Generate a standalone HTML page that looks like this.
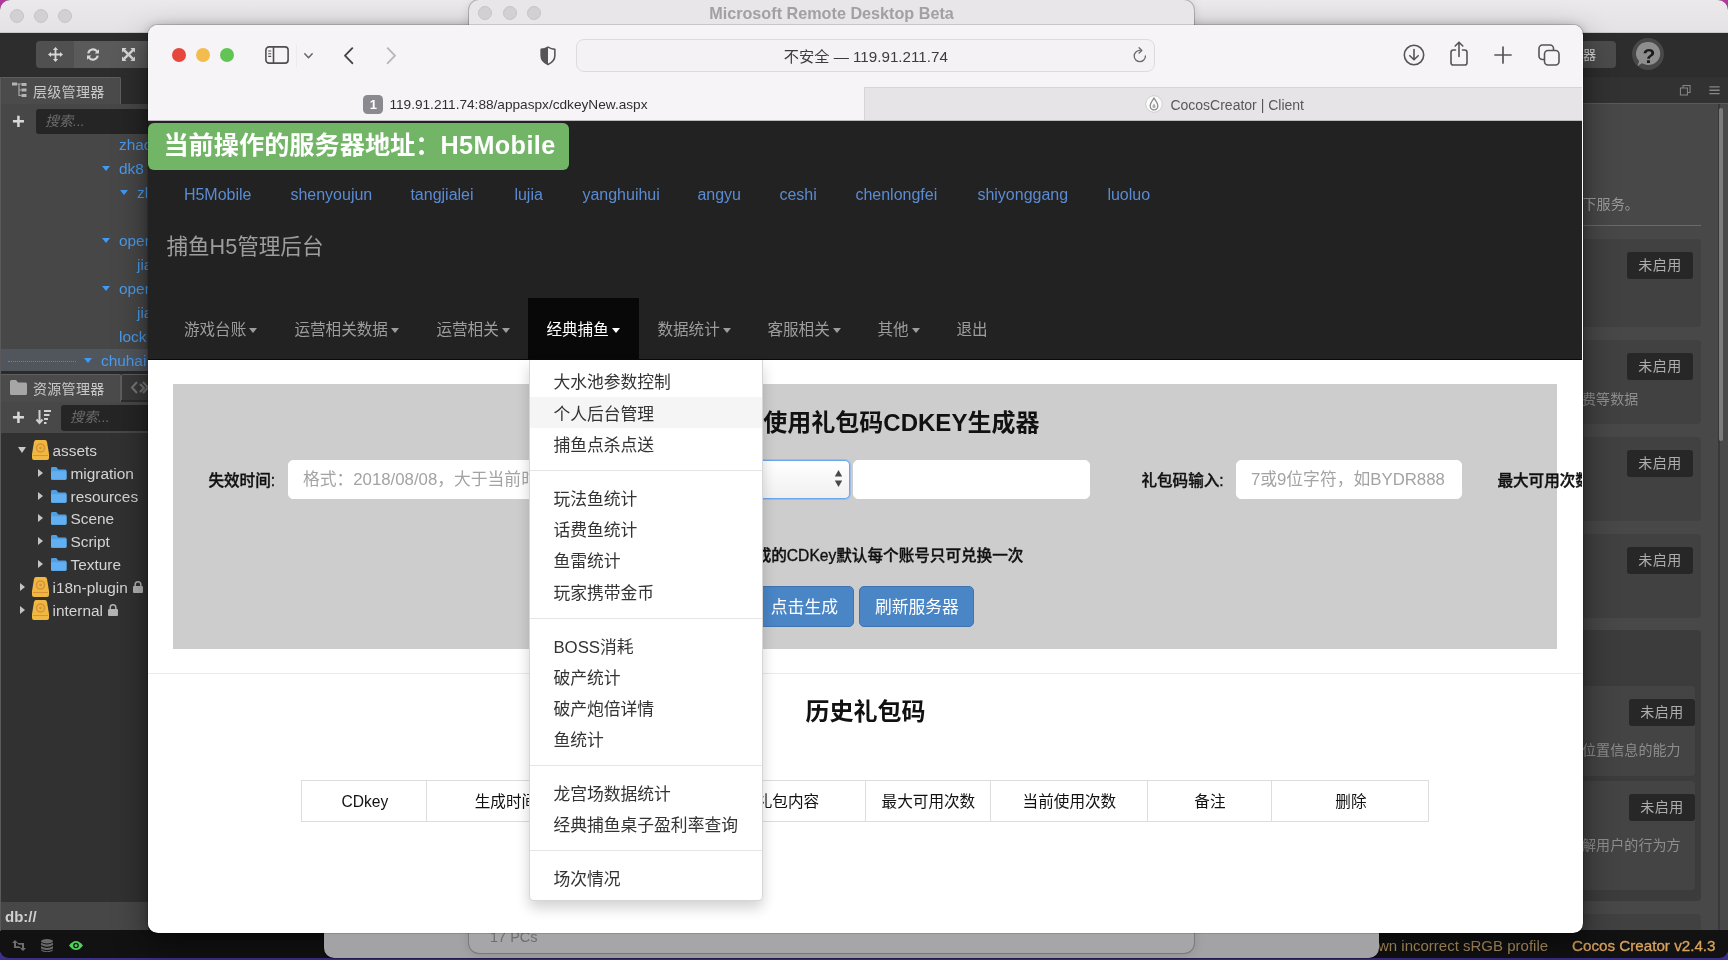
<!DOCTYPE html>
<html lang="zh-CN">
<head>
<meta charset="utf-8">
<title>捕鱼H5管理后台</title>
<style>
*{box-sizing:border-box;margin:0;padding:0}
html,body{width:1728px;height:960px;overflow:hidden;background:#3b2f8e}
body{font-family:"Liberation Sans","Noto Sans CJK SC",sans-serif;-webkit-font-smoothing:antialiased}
.abs,.t{position:absolute}
.t{white-space:nowrap;line-height:1}
#desk{position:absolute;left:0;top:0;width:1728px;height:960px;overflow:hidden;will-change:transform;
 background:linear-gradient(180deg,#b5369c 0,#a0349c 40px,#5a2f94 900px,#3b2f8e 960px)}
/* ---------- Cocos Creator window ---------- */
#cocos{position:absolute;left:0;top:0;width:1728px;height:958px;border-radius:10px 10px 9px 9px;overflow:hidden;background:#2c2c2c}
#cc-title{position:absolute;left:0;top:0;width:1728px;height:33px;background:linear-gradient(180deg,#ebe9eb,#e4e2e4);border-bottom:1px solid #c9c7c9}
.tl{position:absolute;width:14px;height:14px;border-radius:50%}
.tl.g{background:#d2d0d2;border:1px solid #c6c4c6}
/* ---------- Safari ---------- */
#safari{position:absolute;left:148.400px;top:25px;width:1434.600px;height:907.500px;border-radius:10px;overflow:hidden;background:#fff;
 box-shadow:0 0 0 1px rgba(0,0,0,.14)}
#sf-shadow{position:absolute;left:148.400px;top:25px;width:1434.600px;height:907.500px;border-radius:10px;box-shadow:0 14px 34px rgba(0,0,0,.45),0 0 10px rgba(0,0,0,.2)}

/* cocos body */
#cc-tool{position:absolute;left:0;top:34px;width:1728px;height:42px;background:#2d2d2d}
.cc-btns{position:absolute;left:36px;top:41px;width:160px;height:27px;border-radius:4px;background:#505050;overflow:hidden}
.cc-btns i{position:absolute;top:0;height:27px;background:#5a5a5a}
.cc-tabrow{position:absolute;height:27px;background:#2d2d2d}
.cc-tab{position:absolute;height:27px;background:#4b4b4b;border:1px solid #5e5e5e;border-bottom:none;border-radius:2px 2px 0 0;color:#cfcfcf;font-size:13.5px}
.cc-panel{position:absolute;background:#474747}
.cc-search{position:absolute;background:#252525;border-radius:3px;color:#6b6b6b;font-style:italic;font-size:14px;line-height:24px;padding-left:9px}
.hn{position:absolute;color:#4a9cf0;font-size:15.400px;line-height:25px;height:24px;white-space:nowrap}
.harr{position:absolute;width:0;height:0;margin-top:.7px;border-left:4.5px solid transparent;border-right:4.5px solid transparent;border-top:5.5px solid #3f9bf5}
.an{position:absolute;color:#d4d4d4;font-size:15.400px;margin-left:.5px;margin-top:.5px;line-height:23px;height:23px;white-space:nowrap}
.aarr-r{position:absolute;width:0;height:0;margin-top:.5px;border-top:4px solid transparent;border-bottom:4px solid transparent;border-left:5.5px solid #c4c4c4}
.aarr-d{position:absolute;width:0;height:0;border-left:4.5px solid transparent;border-right:4.5px solid transparent;border-top:6px solid #c8c8c8}
svg{position:absolute;overflow:visible}

.badge{position:absolute;left:1627px;width:66px;height:27px;border-radius:3px;background:#272727;color:#adadad;font-size:14px;line-height:26px;text-align:center;letter-spacing:.5px}
.card{position:absolute;left:1560px;width:141px;background:#414141;border-radius:4px}
.rtxt{position:absolute;color:#8e8e8e;font-size:14px;line-height:20px;white-space:nowrap;letter-spacing:.1px}

/* mid windows */
#bigwin{position:absolute;left:324px;top:700px;width:1055px;height:257.500px;border-radius:10px;background:#a3a3a5;box-shadow:0 0 0 1px rgba(0,0,0,.35)}
#mrd{position:absolute;left:469px;top:0;width:725px;height:953px;border-radius:10px;background:#a6a6a8;box-shadow:0 0 0 1px rgba(0,0,0,.2),0 2px 12px rgba(0,0,0,.13);overflow:hidden}
#mrd-title{position:absolute;left:0;top:0;width:725px;height:28px;background:#e8e6e8}
/* safari chrome */
#sf-tool{position:absolute;left:0;top:0;width:1434px;height:62px;background:#f6f4f7}
#sf-url{position:absolute;left:428px;top:14px;width:579px;height:33px;border-radius:8px;background:#f4f2f5;border:1px solid #dddbde}
#sf-tabs{position:absolute;left:0;top:62px;width:1434px;height:33px;background:#f6f4f7}
#sf-tab2{position:absolute;left:716px;top:62px;width:718px;height:33px;background:#e6e4e7;border-top:1px solid #d6d4d7;border-left:1px solid #d6d4d7}
#web{position:absolute;left:0;top:95px;width:1434px;height:812px;background:#fff;overflow:hidden}

/* web page */
#nav{position:absolute;left:0;top:0;width:1434px;height:239.500px;background:#222;border-bottom:1px solid #0a0a0a}
#glabel{position:absolute;left:0;top:3px;width:421px;height:47px;border-radius:6px;background:#73b566;color:#fff;font-size:25.200px;font-weight:bold;line-height:45.500px;padding-left:15px;white-space:nowrap}
.sl{position:absolute;top:65px;font-size:16px;line-height:20px;color:#5b8bd2;white-space:nowrap}
.ni{position:absolute;top:199.600px;font-size:15.600px;line-height:20px;color:#9d9d9d;white-space:nowrap}
.ni b{display:inline-block;width:0;height:0;margin-left:3px;vertical-align:2px;border-left:4.800px solid transparent;border-right:4.800px solid transparent;border-top:5px solid currentColor}
#jumbo{position:absolute;left:25px;top:264px;width:1384px;height:264.500px;background:#cdcdcd}
.lbl{position:absolute;font-size:15.600px;font-weight:500;-webkit-text-stroke:.35px #111;color:#111;line-height:20px;white-space:nowrap}
.inp{position:absolute;top:340px;height:38.500px;background:#fff;border:1px solid #fff;border-radius:5px;font-size:16.800px;color:#a3a3a3;line-height:37.500px;padding-left:14px;white-space:nowrap;overflow:hidden}
.btn{position:absolute;top:466px;height:41px;border-radius:5px;background:#4a85c6;border:1px solid #3f74b0;color:#fff;font-size:16.800px;line-height:41.500px;text-align:center;white-space:nowrap}
#tbl{position:absolute;left:153px;top:660px;width:1128px;height:42px;border:1px solid #ddd}
#tbl div{position:absolute;top:0;height:40px;border-left:1px solid #ddd;font-size:15.600px;color:#111;line-height:42px;text-align:center;white-space:nowrap}
#dd{position:absolute;left:380.500px;top:239.500px;width:234px;height:541px;background:#fff;border:1px solid rgba(0,0,0,.16);border-top:none;border-radius:0 0 5px 5px;box-shadow:0 7px 14px rgba(0,0,0,.18)}
#dd .it{position:absolute;left:0;width:232px;margin-top:.5px;height:31px;padding-left:23.500px;font-size:16.800px;line-height:35.500px;color:#333;white-space:nowrap}
#dd .dv{position:absolute;left:0;margin-top:.5px;width:232px;height:1px;background:#e5e5e5}
</style>
</head>
<body>
<div id="desk">
 <div id="cocos">
  <div id="cc-title">
   <div class="tl g" style="left:10px;top:9px"></div>
   <div class="tl g" style="left:34px;top:9px"></div>
   <div class="tl g" style="left:58px;top:9px"></div>
  </div>

  <div id="cc-tool"></div>
  <div class="abs" style="left:0;top:77px;width:1px;height:854px;background:#5a5a5a;z-index:3"></div>
  <div class="cc-btns"><i style="left:38px;width:122px"></i></div>
  <svg style="left:48px;top:47px" width="15" height="15" viewBox="0 0 15 15"><path d="M7.5 0l2.6 3H8.4v3.6H12V4.9l3 2.6-3 2.6V8.4H8.4V12h1.7l-2.6 3-2.6-3h1.7V8.4H3v1.7L0 7.5l3-2.6v1.7h3.6V3H4.9z" fill="#d6d6d6"/></svg>
  <svg style="left:86px;top:48px" width="14" height="13" viewBox="0 0 14 13"><path d="M1.2 5.2A5.9 5.9 0 0 1 11.6 2.6L13 1.2v4.4H8.6l1.6-1.6A3.9 3.9 0 0 0 3.3 5.6zM12.8 7.8A5.9 5.9 0 0 1 2.4 10.4L1 11.8V7.4h4.4L3.8 9a3.9 3.9 0 0 0 6.9-1.6z" fill="#d6d6d6"/></svg>
  <svg style="left:122px;top:48px" width="13" height="13" viewBox="0 0 13 13"><path d="M0 0h4.6L3.2 1.4 6.5 4.7 9.8 1.4 8.4 0H13v4.6L11.6 3.2 8.3 6.5l3.3 3.3L13 8.4V13H8.4l1.4-1.4L6.5 8.3 3.2 11.6 4.6 13H0V8.4l1.4 1.4L4.7 6.5 1.4 3.2 0 4.6z" fill="#d6d6d6"/></svg>

  <!-- hierarchy panel -->
  <div class="cc-tabrow" style="left:0;top:77px;width:148px"></div>
  <div class="cc-tab" style="left:0;top:77px;width:121px"></div>
  <svg style="left:12px;top:82px" width="15" height="16" viewBox="0 0 15 16"><path d="M0 0.500h5v3H0zM9.500 1h5v3h-5zM9.500 6.500h5v3h-5zM9.500 12h5v3h-5z" fill="#b4b4b4"/><path d="M5 2h4.500M7 2v11.500h2.500M7 8h2.500" fill="none" stroke="#a8a8a8" stroke-width="1.200"/></svg>
  <div class="t" style="left:33px;top:85px;font-size:14px;color:#c8c8c8;letter-spacing:.3px">层级管理器</div>
  <div class="cc-panel" style="left:0;top:104px;width:148px;height:268px"></div>
  <div class="t" style="left:12px;top:111px;font-size:22px;font-weight:bold;color:#d8d8d8;line-height:22px">+</div>
  <div class="cc-search" style="left:36px;top:109px;width:120px;height:25px">搜索...</div>
  <div class="hn" style="left:119px;top:132px">zhao</div>
  <div class="harr" style="left:102px;top:165px"></div><div class="hn" style="left:119px;top:156px">dk8</div>
  <div class="harr" style="left:120px;top:189px"></div><div class="hn" style="left:137px;top:180px">zl</div>
  <div class="harr" style="left:102px;top:237px"></div><div class="hn" style="left:119px;top:228px">open</div>
  <div class="hn" style="left:137px;top:252px">jia</div>
  <div class="harr" style="left:102px;top:285px"></div><div class="hn" style="left:119px;top:276px">open</div>
  <div class="hn" style="left:137px;top:300px">jia</div>
  <div class="hn" style="left:119px;top:324px">lock</div>
  <div class="abs" style="left:0;top:349px;width:148px;height:21.500px;background:#51565d"></div>
  <div class="abs" style="left:8px;top:361px;width:68px;height:0;border-top:1px dotted #a37a40"></div>
  <div class="harr" style="left:84px;top:357px"></div><div class="hn" style="left:101px;top:348px">chuhai</div>
  <div class="abs" style="left:0;top:371px;width:148px;height:4px;background:#2a2a2a"></div>

  <!-- assets panel -->
  <div class="cc-tabrow" style="left:0;top:375px;width:148px"></div>
  <div class="cc-tab" style="left:0;top:374px;width:121px;height:28px"></div>
  <div class="cc-tab" style="left:121px;top:374px;width:40px;height:26px;background:#3a3a3a"></div>
  <svg style="left:10px;top:380px" width="17" height="15" viewBox="0 0 17 15"><path d="M0 1.5Q0 0 1.5 0H6l2 2.5h7.5Q17 2.500 17 4v9.500Q17 15 15.500 15h-14Q0 15 0 13.500z" fill="#a6a6a6"/></svg>
  <div class="t" style="left:33px;top:382px;font-size:14px;color:#c8c8c8;letter-spacing:.3px">资源管理器</div>
  <svg style="left:131px;top:381px" width="20" height="13" viewBox="0 0 20 13"><path d="M6 1L1 6.500 6 12M9 3l4 4-4 4M12 1l5 5.500-5 5.500" fill="none" stroke="#777" stroke-width="2"/></svg>
  <div class="cc-panel" style="left:0;top:402px;width:148px;height:31px;background:#484848"></div>
  <div class="t" style="left:12px;top:407px;font-size:22px;font-weight:bold;color:#d8d8d8;line-height:22px">+</div>
  <svg style="left:36px;top:410px" width="15" height="15" viewBox="0 0 15 15"><path d="M3.500 0v12M0.500 9.500l3 3.500 3-3.500" fill="none" stroke="#d0d0d0" stroke-width="2"/><path d="M8 1h7M8 5h5.500M8 9h4M8 13h2.500" stroke="#d0d0d0" stroke-width="2"/></svg>
  <div class="cc-search" style="left:61px;top:405px;width:100px;height:26px;line-height:25px">搜索...</div>
  <div class="cc-panel" style="left:0;top:433px;width:148px;height:469px;background:#313131"></div>
  <div class="aarr-d" style="left:18px;top:447px"></div>
  <svg style="left:32px;top:440px" width="17" height="20" viewBox="0 0 17 20"><path d="M4 0h9q1.500 0 2 2l2 12v4q0 2-2 2H2q-2 0-2-2v-4L2 2Q2.500 0 4 0z" fill="#f0b840"/><circle cx="8.500" cy="8" r="4" fill="none" stroke="#d8933a" stroke-width="1.600"/><circle cx="8.500" cy="8" r="1.400" fill="#d8933a"/><path d="M1 15.500h15" stroke="#d8933a" stroke-width="1"/></svg>
  <div class="an" style="left:52px;top:438px">assets</div>
  <div class="aarr-r" style="left:38px;top:468.5px"></div>
  <svg style="left:51px;top:467.3px" width="15.500" height="12.700" preserveAspectRatio="none" viewBox="0 0 16 15"><path d="M0 1.500Q0 0 1.500 0H5.500l2 3h7Q16 3 16 4.500v9Q16 15 14.500 15h-13Q0 15 0 13.500z" fill="#4e9fe6"/><path d="M0 5h16v8.500Q16 15 14.500 15h-13Q0 15 0 13.500z" fill="#62b0f2"/></svg>
  <div class="an" style="left:70px;top:461px">migration</div>
  <div class="aarr-r" style="left:38px;top:491.5px"></div>
  <svg style="left:51px;top:490.3px" width="15.500" height="12.700" preserveAspectRatio="none" viewBox="0 0 16 15"><path d="M0 1.500Q0 0 1.500 0H5.500l2 3h7Q16 3 16 4.500v9Q16 15 14.500 15h-13Q0 15 0 13.500z" fill="#4e9fe6"/><path d="M0 5h16v8.500Q16 15 14.500 15h-13Q0 15 0 13.500z" fill="#62b0f2"/></svg>
  <div class="an" style="left:70px;top:484px">resources</div>
  <div class="aarr-r" style="left:38px;top:513.5px"></div>
  <svg style="left:51px;top:512.3px" width="15.500" height="12.700" preserveAspectRatio="none" viewBox="0 0 16 15"><path d="M0 1.500Q0 0 1.500 0H5.500l2 3h7Q16 3 16 4.500v9Q16 15 14.500 15h-13Q0 15 0 13.500z" fill="#4e9fe6"/><path d="M0 5h16v8.500Q16 15 14.500 15h-13Q0 15 0 13.500z" fill="#62b0f2"/></svg>
  <div class="an" style="left:70px;top:506px">Scene</div>
  <div class="aarr-r" style="left:38px;top:536.5px"></div>
  <svg style="left:51px;top:535.3px" width="15.500" height="12.700" preserveAspectRatio="none" viewBox="0 0 16 15"><path d="M0 1.500Q0 0 1.500 0H5.500l2 3h7Q16 3 16 4.500v9Q16 15 14.500 15h-13Q0 15 0 13.500z" fill="#4e9fe6"/><path d="M0 5h16v8.500Q16 15 14.500 15h-13Q0 15 0 13.500z" fill="#62b0f2"/></svg>
  <div class="an" style="left:70px;top:529px">Script</div>
  <div class="aarr-r" style="left:38px;top:559.5px"></div>
  <svg style="left:51px;top:558.3px" width="15.500" height="12.700" preserveAspectRatio="none" viewBox="0 0 16 15"><path d="M0 1.500Q0 0 1.500 0H5.500l2 3h7Q16 3 16 4.500v9Q16 15 14.500 15h-13Q0 15 0 13.500z" fill="#4e9fe6"/><path d="M0 5h16v8.500Q16 15 14.500 15h-13Q0 15 0 13.500z" fill="#62b0f2"/></svg>
  <div class="an" style="left:70px;top:552px">Texture</div>
  <div class="aarr-r" style="left:20px;top:582.5px"></div>
  <svg style="left:32px;top:577px" width="17" height="20" viewBox="0 0 17 20"><path d="M4 0h9q1.500 0 2 2l2 12v4q0 2-2 2H2q-2 0-2-2v-4L2 2Q2.500 0 4 0z" fill="#f0b840"/><circle cx="8.500" cy="8" r="4" fill="none" stroke="#d8933a" stroke-width="1.600"/><circle cx="8.500" cy="8" r="1.400" fill="#d8933a"/><path d="M1 15.500h15" stroke="#d8933a" stroke-width="1"/></svg>
  <div class="an" style="left:52px;top:575px">i18n-plugin</div>
  <div class="aarr-r" style="left:20px;top:605.5px"></div>
  <svg style="left:32px;top:600px" width="17" height="20" viewBox="0 0 17 20"><path d="M4 0h9q1.500 0 2 2l2 12v4q0 2-2 2H2q-2 0-2-2v-4L2 2Q2.500 0 4 0z" fill="#f0b840"/><circle cx="8.500" cy="8" r="4" fill="none" stroke="#d8933a" stroke-width="1.600"/><circle cx="8.500" cy="8" r="1.400" fill="#d8933a"/><path d="M1 15.500h15" stroke="#d8933a" stroke-width="1"/></svg>
  <div class="an" style="left:52px;top:598px">internal</div>

  <svg style="left:133px;top:581px" width="10" height="12" viewBox="0 0 10 12"><path d="M2.200 5.500V3.600a2.800 2.800 0 0 1 5.600 0V5.500" fill="none" stroke="#b4b4b4" stroke-width="1.500"/><rect x="0" y="5" width="10" height="7" rx="1" fill="#b4b4b4"/></svg>
  <svg style="left:108px;top:604px" width="10" height="12" viewBox="0 0 10 12"><path d="M2.200 5.500V3.600a2.800 2.800 0 0 1 5.600 0V5.500" fill="none" stroke="#b4b4b4" stroke-width="1.500"/><rect x="0" y="5" width="10" height="7" rx="1" fill="#b4b4b4"/></svg>
  <div class="abs" style="left:0;top:902px;width:148px;height:29px;background:#474747"></div>
  <div class="t" style="left:5px;top:909px;font-size:15px;font-weight:bold;color:#cfcfcf">db://</div>
  <div class="abs" style="left:0;top:931px;width:1728px;height:26px;background:#131313"></div>

  <!-- right side of cocos -->
  <div class="abs" style="left:1560px;top:41px;width:56px;height:27px;border-radius:4px;background:#4c4c4c"></div>
  <div class="t" style="left:1583px;top:48px;font-size:13px;color:#d6d6d6">器</div>
  <div class="abs" style="left:1632px;top:38px;width:32px;height:32px;border-radius:50%;background:#484848"></div>
  <svg style="left:1635px;top:41px" width="27" height="27" viewBox="0 0 27 27"><path d="M13.500 1A12 11.500 0 1 1 7 22.300L2.500 25l1.600-4.800A11.500 11.500 0 0 1 13.500 1z" fill="#8e8e8e"/></svg>
  <div class="t" style="left:1642.500px;top:44.500px;font-size:21px;font-weight:bold;color:#1a1a1a;line-height:22px">?</div>
  <div class="abs" style="left:1582px;top:77px;width:146px;height:26px;background:#323232"></div>
  <div class="abs" style="left:1582px;top:103px;width:146px;height:1px;background:#5a5a5a"></div>
  <svg style="left:1679.500px;top:85px" width="10.500" height="10.500" viewBox="0 0 12 12"><path d="M3.500 0.500h8v8h-8z" fill="none" stroke="#868686" stroke-width="1.200"/><path d="M0.500 3.500h8v8h-8z" fill="#323232" stroke="#868686" stroke-width="1.200"/></svg>
  <svg style="left:1708.500px;top:86px" width="11" height="8.500" viewBox="0 0 12 10"><path d="M0 1h12M0 5h12M0 9h12" stroke="#868686" stroke-width="1.500"/></svg>
  <div class="cc-panel" style="left:1560px;top:104px;width:168px;height:827px;background:#484848"></div>
  <div class="abs" style="left:1718px;top:104px;width:2px;height:827px;background:#383838"></div>
  <div class="abs" style="left:1718.500px;top:108px;width:4px;height:333px;background:#7c7c7c;border-radius:2px"></div>
  <div class="rtxt" style="left:1582.500px;top:193.500px;color:#9c9c9c">下服务。</div>
  <div class="abs" style="left:1560px;top:225px;width:141px;height:1px;background:#6a6a6a"></div>
  <div class="card" style="top:239px;height:88px"></div><div class="badge" style="top:252px">未启用</div>
  <div class="card" style="top:340px;height:84px"></div><div class="badge" style="top:353px">未启用</div>
  <div class="rtxt" style="left:1582px;top:389px">费等数据</div>
  <div class="card" style="top:437px;height:84px"></div><div class="badge" style="top:450px">未启用</div>
  <div class="card" style="top:534px;height:84px"></div><div class="badge" style="top:547px">未启用</div>
  <div class="card" style="top:630px;height:271px;background:#3c3c3c"></div>
  <div class="card" style="top:686px;height:90px;width:135px;background:#444"></div><div class="badge" style="top:699px;left:1629px">未启用</div>
  <div class="rtxt" style="left:1582px;top:740px">位置信息的能力</div>
  <div class="card" style="top:781px;height:109px;width:135px;background:#444"></div><div class="badge" style="top:794px;left:1629px">未启用</div>
  <div class="rtxt" style="left:1582px;top:835px">解用户的行为方</div>
  <div class="card" style="top:914px;height:30px"></div>
  <div class="abs" style="left:0;top:930px;width:1728px;height:28px;background:#121212"></div>
  <svg style="left:12px;top:940px" width="14" height="11" viewBox="0 0 14 11"><path d="M3 0L0 3h2v5h7L7.200 6.200H4V3h2zM11 11l3-3h-2V3H5l1.800 1.800H10V8H8z" fill="#6e6e6e"/></svg>
  <svg style="left:41px;top:939px" width="12" height="13" viewBox="0 0 12 13"><ellipse cx="6" cy="2.200" rx="6" ry="2.200" fill="#6a6a6a"/><path d="M0 3.800q6 3.400 12 0v2.200q-6 3.400-12 0zM0 7.200q6 3.400 12 0v2.200q-6 3.400-12 0zM0 10.600q6 3.400 12 0v0.400q-1 2-6 2t-6-2z" fill="#6a6a6a"/></svg>
  <svg style="left:69px;top:941px" width="14" height="9" viewBox="0 0 14 9"><path d="M0 4.500Q3.500 0 7 0t7 4.500Q10.500 9 7 9T0 4.500z" fill="#4ed25c"/><circle cx="7" cy="4.500" r="2.800" fill="#131313"/><circle cx="7" cy="4.500" r="1.500" fill="#4ed25c"/></svg>
  <div class="t" style="left:1378px;top:938px;font-size:15px;color:#b99a68">wn incorrect sRGB profile</div>
  <div class="t" style="left:1572px;top:937.500px;font-size:15.200px;color:#d9a35c;-webkit-text-stroke:.3px #d9a35c">Cocos Creator v2.4.3</div>

 </div>

 <div id="sf-shadow"></div>
 <div id="bigwin"></div>
 <div id="mrd">
  <div id="mrd-title">
   <div class="tl g" style="left:9px;top:6px"></div>
   <div class="tl g" style="left:34px;top:6px"></div>
   <div class="tl g" style="left:58px;top:6px"></div>
   <div class="t" style="left:0;width:725px;text-align:center;top:5px;font-size:16.200px;font-weight:bold;color:#a2a0a2">Microsoft Remote Desktop Beta</div>
  </div>
  <div class="t" style="left:21px;top:930px;font-size:14.500px;color:#6f6f71">17 PCs</div>
 </div>

 <div id="safari">

  <div id="sf-tool"></div>
  <div class="tl" style="left:23.500px;top:23.100px;background:#e5473c;width:14px;height:14px"></div>
  <div class="tl" style="left:47.500px;top:23.100px;background:#f2bd4e;width:14px;height:14px"></div>
  <div class="tl" style="left:71.500px;top:23.100px;background:#62c455;width:14px;height:14px"></div>
  <svg style="left:117px;top:21.300px" width="24" height="18" viewBox="0 0 24 18"><rect x="0.900" y="0.900" width="22.200" height="16.200" rx="3.200" fill="none" stroke="#4f4f4f" stroke-width="1.600"/><path d="M8.500 1v16" stroke="#4f4f4f" stroke-width="1.600"/><path d="M3.200 5h3M3.200 7.700h3M3.200 10.400h3" stroke="#4f4f4f" stroke-width="1.100"/></svg>
  <svg style="left:156px;top:28px" width="9" height="6" viewBox="0 0 9 6"><path d="M0.800 0.800L4.500 4.700 8.200 0.800" fill="none" stroke="#666" stroke-width="1.500" stroke-linecap="round" stroke-linejoin="round"/></svg>
  <svg style="left:195px;top:21px" width="11" height="19" viewBox="0 0 11 19"><path d="M9.300 2.200L2 9.700 9.300 17.200" fill="none" stroke="#454545" stroke-width="1.900" stroke-linecap="round" stroke-linejoin="round"/></svg>
  <svg style="left:238px;top:21px" width="11" height="19" viewBox="0 0 11 19"><path d="M1.700 2.200L9 9.700 1.700 17.200" fill="none" stroke="#b9b7ba" stroke-width="1.900" stroke-linecap="round" stroke-linejoin="round"/></svg>
  <svg style="left:391.500px;top:20.500px" width="16" height="19.700" viewBox="0 0 17 21"><path d="M8.500 1.200Q5 3.200 1.200 3.600V10.500Q1.200 16.500 8.500 19.800 15.800 16.500 15.800 10.500V3.600Q12 3.200 8.500 1.200z" fill="none" stroke="#555" stroke-width="1.700" stroke-linejoin="round"/><path d="M8.500 1.200Q5 3.200 1.200 3.600V10.500Q1.200 16.500 8.500 19.800z" fill="#555"/></svg>
  <div class="abs" style="left:148px;top:20px;width:1px;height:22px;background:#eceaed"></div>
  <div id="sf-url"></div>
  <div class="t" style="left:428px;width:579px;text-align:center;top:23.500px;font-size:15.200px;color:#3c3c3e">不安全 — 119.91.211.74</div>
  <svg style="left:984.500px;top:22px" width="14" height="16" viewBox="0 0 15 17"><path d="M13.300 9.500A6 6 0 1 1 7.500 3.600" fill="none" stroke="#6a6a6a" stroke-width="1.400" stroke-linecap="round"/><path d="M6.500 0.800L9.500 3.600 6.500 6.400" fill="none" stroke="#6a6a6a" stroke-width="1.400" stroke-linecap="round" stroke-linejoin="round"/></svg>
  <svg style="left:1255px;top:19px" width="22" height="22" viewBox="0 0 22 22"><circle cx="11" cy="11" r="9.700" fill="none" stroke="#555" stroke-width="1.600"/><path d="M11 5.500v10M6.800 11.700L11 15.800l4.200-4.100" fill="none" stroke="#555" stroke-width="1.600" stroke-linecap="round" stroke-linejoin="round"/></svg>
  <svg style="left:1302px;top:16px" width="18" height="25" viewBox="0 0 18 25"><path d="M5.500 9H3.300Q1 9 1 11.300v10.400Q1 24 3.300 24h11.400Q17 24 17 21.700V11.300Q17 9 14.700 9H12.500" fill="none" stroke="#555" stroke-width="1.600" stroke-linecap="round"/><path d="M9 15.500V1.500M5.200 5L9 1.200 12.800 5" fill="none" stroke="#555" stroke-width="1.600" stroke-linecap="round" stroke-linejoin="round"/></svg>
  <svg style="left:1346px;top:21px" width="18" height="18" viewBox="0 0 18 18"><path d="M9 1v16M1 9h16" stroke="#555" stroke-width="1.700" stroke-linecap="round"/></svg>
  <svg style="left:1390px;top:19px" width="22" height="22" viewBox="0 0 22 22"><rect x="1" y="1" width="14.500" height="14.500" rx="3.500" fill="none" stroke="#555" stroke-width="1.600"/><rect x="6.500" y="6.500" width="14.500" height="14.500" rx="3.500" fill="#f6f4f7" stroke="#555" stroke-width="1.600"/></svg>
  <div id="sf-tabs"></div>
  <div id="sf-tab2"></div>
  <div class="abs" style="left:215px;top:70px;width:20px;height:19px;border-radius:4.500px;background:#8b8b8f"></div>
  <div class="t" style="left:215px;width:20px;text-align:center;top:73px;font-size:13px;font-weight:bold;color:#fff">1</div>
  <div class="t" style="left:241px;top:73px;font-size:13.650px;color:#2f2f31">119.91.211.74:88/appaspx/cdkeyNew.aspx</div>
  <svg style="left:997px;top:70px" width="18" height="18" viewBox="0 0 18 18"><circle cx="9" cy="9" r="8.300" fill="#fbfbfb" stroke="#cfcfcf" stroke-width="1"/><path d="M9 3.200Q5.200 8.500 5.200 11A3.800 3.800 0 0 0 12.800 11Q12.800 8.500 9 3.200z" fill="none" stroke="#8a8a8a" stroke-width="1.300"/><path d="M9 8.500Q7.500 10.500 7.500 11.500A1.500 1.500 0 0 0 10.500 11.500Q10.500 10.500 9 8.500z" fill="#aaa"/></svg>
  <div class="t" style="left:1022px;top:73px;font-size:14px;color:#58585a">CocosCreator | Client</div>
  <div id="web">

   <div id="nav"></div>
   <div class="abs" style="left:0;top:0;width:1434px;height:1px;background:#bdbbbe"></div>
   <div id="glabel">当前操作的服务器地址：<span style="letter-spacing:.4px">H5Mobile</span></div>
   <div class="sl" style="left:35.5px">H5Mobile</div>
   <div class="sl" style="left:142px">shenyoujun</div>
   <div class="sl" style="left:262px">tangjialei</div>
   <div class="sl" style="left:366px">lujia</div>
   <div class="sl" style="left:434px">yanghuihui</div>
   <div class="sl" style="left:549px">angyu</div>
   <div class="sl" style="left:631px">ceshi</div>
   <div class="sl" style="left:707px">chenlongfei</div>
   <div class="sl" style="left:829px">shiyonggang</div>
   <div class="sl" style="left:959px">luoluo</div>
   <div class="t" style="left:18px;top:114.600px;font-size:21.600px;line-height:24px;color:#9d9d9d">捕鱼H5管理后台</div>
   <div class="abs" style="left:380px;top:178px;width:110.500px;height:60.700px;background:#080808"></div>
   <div class="ni" style="left:35.5px">游戏台账<b></b></div>
   <div class="ni" style="left:146px">运营相关数据<b></b></div>
   <div class="ni" style="left:288px">运营相关<b></b></div>
   <div class="ni" style="left:398px;color:#fff">经典捕鱼<b></b></div>
   <div class="ni" style="left:509px">数据统计<b></b></div>
   <div class="ni" style="left:619px">客服相关<b></b></div>
   <div class="ni" style="left:729px">其他<b></b></div>
   <div class="ni" style="left:808px">退出</div>
   <div id="jumbo"></div>
   <div class="t" style="left:25px;width:1384px;text-align:center;top:291px;font-size:24px;font-weight:bold;color:#111;line-height:24px">可重复使用礼包码CDKEY生成器</div>
   <div class="lbl" style="left:60px;top:351px">失效时间:</div>
   <div class="inp" style="left:139.500px;width:330px">格式：2018/08/08，大于当前时间</div>
   <div class="inp" style="left:474px;width:228px;border:1.500px solid #6aa7ee;box-shadow:0 0 0 1px rgba(120,175,240,.55);background:linear-gradient(180deg,#fff,#f0f0f0)"></div>
   <svg style="left:686px;top:349px" width="9" height="19" viewBox="0 0 9 19"><path d="M4.500 1L8.200 7.500H0.800zM4.500 18L8.200 11.500H0.800z" fill="#4a4a4a"/></svg>
   <div class="inp" style="left:704.500px;width:237px"></div>
   <div class="lbl" style="left:993px;top:351px">礼包码输入:</div>
   <div class="inp" style="left:1087.500px;width:226.500px">7或9位字符，如BYDR888</div>
   <div class="lbl" style="left:1349px;top:351px">最大可用次数:</div>
   <div class="lbl" style="left:0;width:875px;text-align:right;top:425.500px">注：手动生成的CDKey默认每个账号只可兑换一次</div>
   <div class="btn" style="left:606px;width:100px">点击生成</div>
   <div class="btn" style="left:711px;width:115px">刷新服务器</div>
   <div class="abs" style="left:0;top:553px;width:1434px;height:1px;background:#eaeaea"></div>
   <div class="t" style="left:0;width:1434px;text-align:center;top:580px;font-size:24px;font-weight:bold;color:#111;line-height:24px">历史礼包码</div>
   <div id="tbl">
    <div style="left:0px;width:125px;border-left:none">CDkey</div>
    <div style="left:124px;width:158px">生成时间</div>
    <div style="left:282px;width:125px">失效时间</div>
    <div style="left:407px;width:156px">礼包内容</div>
    <div style="left:563px;width:125px">最大可用次数</div>
    <div style="left:688px;width:157px">当前使用次数</div>
    <div style="left:845px;width:124px">备注</div>
    <div style="left:969px;width:158px">删除</div>
   </div>
   <div id="dd">
    <div class="it" style="top:5.0px">大水池参数控制</div>
    <div class="it" style="top:36.5px;background:#f5f5f5">个人后台管理</div>
    <div class="it" style="top:67.5px">捕鱼点杀点送</div>
    <div class="dv" style="top:109.5px"></div>
    <div class="it" style="top:121.5px">玩法鱼统计</div>
    <div class="it" style="top:152.5px">话费鱼统计</div>
    <div class="it" style="top:184.0px">鱼雷统计</div>
    <div class="it" style="top:215.5px">玩家携带金币</div>
    <div class="dv" style="top:257.5px"></div>
    <div class="it" style="top:269.5px">BOSS消耗</div>
    <div class="it" style="top:300.5px">破产统计</div>
    <div class="it" style="top:331.5px">破产炮倍详情</div>
    <div class="it" style="top:363.0px">鱼统计</div>
    <div class="dv" style="top:405.0px"></div>
    <div class="it" style="top:416.5px">龙宫场数据统计</div>
    <div class="it" style="top:448.0px">经典捕鱼桌子盈利率查询</div>
    <div class="dv" style="top:490.0px"></div>
    <div class="it" style="top:502.0px">场次情况</div>
   </div>

  </div>

 </div>
</div>
</body>
</html>
